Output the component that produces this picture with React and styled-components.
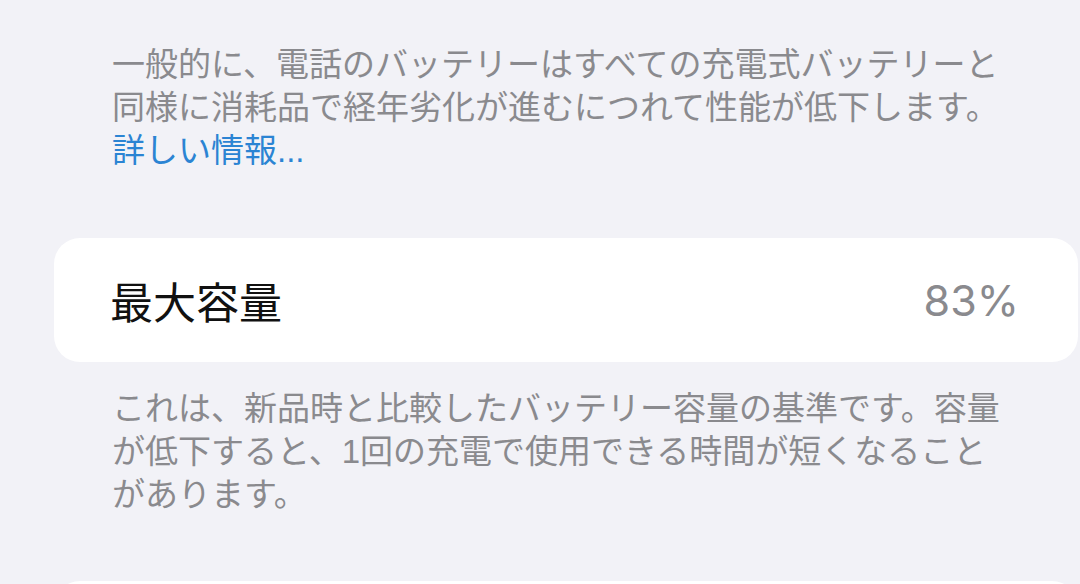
import React from "react";
import styled, { createGlobalStyle } from "styled-components";

const GlobalStyle = createGlobalStyle`
  html, body {
    margin: 0;
    padding: 0;
    background: #f2f2f7;
  }
  body {
    font-family: "Noto Sans CJK JP", "Noto Sans", sans-serif;
    -webkit-font-smoothing: antialiased;
  }
`;

const Screen = styled.div`
  width: 1080px;
  height: 584px;
  overflow: hidden;
  background: #f2f2f7;
  display: flex;
  flex-direction: column;
  padding-top: 43px;
  box-sizing: border-box;
`;

const Footnote = styled.p`
  margin: ${(p) => p.$top || 0}px 0 0 0;
  padding-left: 112px;
  width: 906px;
  font-family: "Liberation Sans", "Noto Sans CJK JP", sans-serif;
  font-size: 33px;
  line-height: 43px;
  color: #8a8a8e;
`;

const MoreLink = styled.a`
  color: #2b84d3;
  text-decoration: none;
`;

const Card = styled.div`
  margin: ${(p) => p.$top}px 2px 0 54px;
  height: ${(p) => p.$height}px;
  flex-shrink: 0;
  background: #ffffff;
  border-radius: 26px;
  display: flex;
  align-items: center;
  justify-content: space-between;
  padding: 0 59px 0 56px;
`;

const RowLabel = styled.span`
  font-size: 43px;
  color: #111111;
  line-height: 1;
`;

const RowValue = styled.span`
  font-family: Inter, "Noto Sans", sans-serif;
  font-size: 43px;
  color: #8a8a8e;
  line-height: 1;
`;

export default function App() {
  return (
    <>
      <GlobalStyle />
      <Screen>
        <Footnote>
          一般的に、電話のバッテリーはすべての充電式バッテリーと同様に消耗品で経年劣化が進むにつれて性能が低下します。
          <br />
          <MoreLink href="#">詳しい情報...</MoreLink>
        </Footnote>

        <Card $top={66} $height={124}>
          <RowLabel>最大容量</RowLabel>
          <RowValue>83%</RowValue>
        </Card>

        <Footnote $top={25}>
          これは、新品時と比較したバッテリー容量の基準です。容量が低下すると、1回の充電で使用できる時間が短くなることがあります。
        </Footnote>

        <Card $top={65} $height={120} />
      </Screen>
    </>
  );
}
